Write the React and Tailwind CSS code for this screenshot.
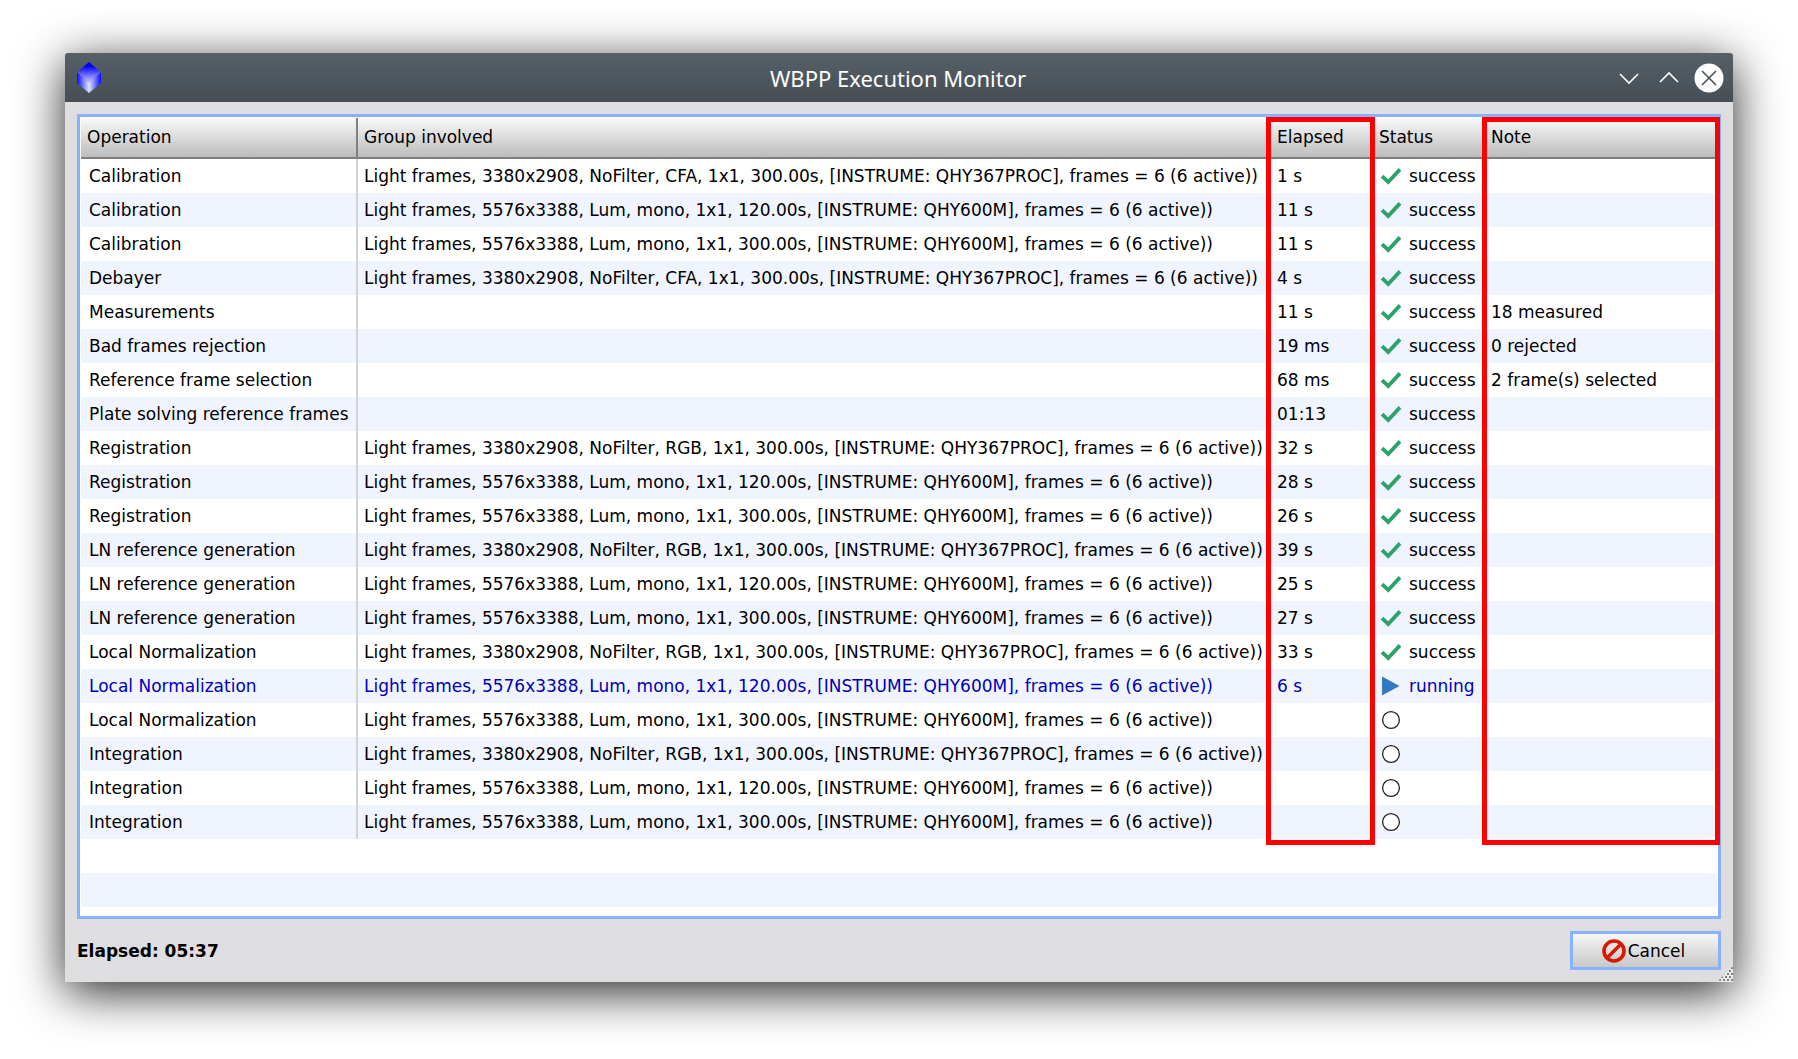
import React from 'react';

const light = (size, filter, exposure, instrument) =>
  `Light frames, ${size}, ${filter}, 1x1, ${exposure}s, [INSTRUME: ${instrument}], frames = 6 (6 active))`;

const CFA_300 = light('3380x2908', 'NoFilter, CFA', '300.00', 'QHY367PROC');
const RGB_300 = light('3380x2908', 'NoFilter, RGB', '300.00', 'QHY367PROC');
const LUM_120 = light('5576x3388', 'Lum, mono', '120.00', 'QHY600M');
const LUM_300 = light('5576x3388', 'Lum, mono', '300.00', 'QHY600M');

const operations = [
  { name: 'Calibration', group: CFA_300, elapsed: '1 s', status: 'success' },
  { name: 'Calibration', group: LUM_120, elapsed: '11 s', status: 'success' },
  { name: 'Calibration', group: LUM_300, elapsed: '11 s', status: 'success' },
  { name: 'Debayer', group: CFA_300, elapsed: '4 s', status: 'success' },
  { name: 'Measurements', elapsed: '11 s', status: 'success', note: '18 measured' },
  { name: 'Bad frames rejection', elapsed: '19 ms', status: 'success', note: '0 rejected' },
  { name: 'Reference frame selection', elapsed: '68 ms', status: 'success', note: '2 frame(s) selected' },
  { name: 'Plate solving reference frames', elapsed: '01:13', status: 'success' },
  { name: 'Registration', group: RGB_300, elapsed: '32 s', status: 'success' },
  { name: 'Registration', group: LUM_120, elapsed: '28 s', status: 'success' },
  { name: 'Registration', group: LUM_300, elapsed: '26 s', status: 'success' },
  { name: 'LN reference generation', group: RGB_300, elapsed: '39 s', status: 'success' },
  { name: 'LN reference generation', group: LUM_120, elapsed: '25 s', status: 'success' },
  { name: 'LN reference generation', group: LUM_300, elapsed: '27 s', status: 'success' },
  { name: 'Local Normalization', group: RGB_300, elapsed: '33 s', status: 'success' },
  { name: 'Local Normalization', group: LUM_120, elapsed: '6 s', status: 'running' },
  { name: 'Local Normalization', group: LUM_300, status: 'pending' },
  { name: 'Integration', group: RGB_300, status: 'pending' },
  { name: 'Integration', group: LUM_120, status: 'pending' },
  { name: 'Integration', group: LUM_300, status: 'pending' }
];

const StatusIcon = ({ status }) => (
  <svg viewBox="0 0 24 24" className="size-6 shrink-0" aria-hidden="true">
    {status === 'success' && (
      <path d="M3 12.2 L9.2 18 L21 5.4" fill="none" stroke="#2ba46b" strokeWidth="3.8" />
    )}
    {status === 'running' && <path d="M3 2.5 L20.5 12 L3 21.5 Z" fill="#3579c2" />}
    {status === 'pending' && (
      <circle cx="12" cy="12" r="8.4" fill="#fff" stroke="#222" strokeWidth="1.3" />
    )}
  </svg>
);

const AppLogo = () => (
  <svg viewBox="0 0 24 31" className="h-[31px] w-6" aria-hidden="true">
    <defs>
      <linearGradient id="logoTop" x1="0" y1="0" x2="0" y2="1">
        <stop offset="0.2" stopColor="#0000f5" />
        <stop offset="1" stopColor="#c8ccff" />
      </linearGradient>
      <linearGradient id="logoLeft" x1="0" y1="0" x2="1" y2="0">
        <stop offset="0" stopColor="#0a0aff" />
        <stop offset="1" stopColor="#dce4fa" />
      </linearGradient>
      <linearGradient id="logoRight" x1="1" y1="0" x2="0" y2="0">
        <stop offset="0" stopColor="#0a0aff" />
        <stop offset="1" stopColor="#dce4fa" />
      </linearGradient>
    </defs>
    <path d="M12 0 L24 10.5 L12 20.5 L0 10.5 Z" fill="url(#logoTop)" />
    <path d="M0 10.5 L12 20.5 V31 L0 21 Z" fill="url(#logoLeft)" />
    <path d="M24 10.5 L12 20.5 V31 L24 21 Z" fill="url(#logoRight)" />
  </svg>
);

const TitleBar = () => (
  <header className="flex h-[49px] items-center justify-between rounded-t-[3px] bg-linear-to-b from-[#566067] to-[#464e54] pr-[10px] pl-3">
    <div className="flex w-26">
      <AppLogo />
    </div>
    <h1 className="font-['Noto_Sans',sans-serif] text-[22px] leading-7 text-[#fcfcfc]">WBPP Execution Monitor</h1>
    <div className="flex gap-3">
      <button type="button" aria-label="Minimize" className="size-7">
        <svg viewBox="0 0 28 28" className="size-7" fill="none" stroke="#fcfcfc" strokeWidth="1.6">
          <path d="M5 10 L14 19 L23 10" />
        </svg>
      </button>
      <button type="button" aria-label="Maximize" className="size-7">
        <svg viewBox="0 0 28 28" className="size-7" fill="none" stroke="#fcfcfc" strokeWidth="1.6">
          <path d="M5 18 L14 9 L23 18" />
        </svg>
      </button>
      <button type="button" aria-label="Close" className="size-7">
        <svg viewBox="0 0 28 28" className="size-7 overflow-visible">
          <circle cx="14" cy="14" r="14.5" fill="#fcfcfc" />
          <path d="M7 7 L21 21 M21 7 L7 21" stroke="#4a5359" strokeWidth="1.6" />
        </svg>
      </button>
    </div>
  </header>
);

const OperationsTable = () => (
  <div className="border-3 border-[#88b2ff] bg-white p-px">
    <div className="relative">
      <table className="w-full table-fixed border-separate border-spacing-0 text-left whitespace-nowrap">
        <colgroup>
          <col className="w-[277px]" />
          <col className="w-[913px]" />
          <col className="w-[102px]" />
          <col className="w-[112px]" />
          <col />
        </colgroup>
        <thead>
          <tr className="h-[41px] bg-linear-to-b from-[#fafafa] to-[#b9b9b9]">
            <th className="border-r-2 border-b-2 border-[#808080] px-1.5 pb-0.5 font-normal">Operation</th>
            <th className="border-b-2 border-[#808080] px-1.5 pb-0.5 font-normal">Group involved</th>
            <th className="border-b-2 border-[#808080] px-1.5 pb-0.5 font-normal">Elapsed</th>
            <th className="border-b-2 border-[#808080] px-1.5 pb-0.5 font-normal">Status</th>
            <th className="border-b-2 border-[#808080] px-1.5 pb-0.5 font-normal">Note</th>
          </tr>
        </thead>
        <tbody>
          {operations.map((op, i) => (
            <tr
              key={i}
              className={`h-[34px] even:bg-[#f0f4ff] ${op.status === 'running' ? 'text-[#0000b4]' : 'text-black'}`}
            >
              <td className="border-r-2 border-[#d3d3d3] pl-2">{op.name}</td>
              <td className="px-1.5">{op.group}</td>
              <td className="px-1.5">{op.elapsed}</td>
              <td className="pl-1.5">
                <div className="flex items-center gap-1.5">
                  <StatusIcon status={op.status} />
                  {op.status !== 'pending' && op.status}
                </div>
              </td>
              <td className="px-1.5">{op.note}</td>
            </tr>
          ))}
        </tbody>
      </table>

      {/* column highlights */}
      <div className="pointer-events-none absolute inset-x-0 -top-px -bottom-1.5 grid grid-cols-[277px_913px_102px_112px_1fr]">
        <div className="col-start-3 -mr-0.5 -ml-[5px] border-5 border-[#ff0000]" />
        <div className="col-start-5 -mr-[3px] -ml-[3px] border-5 border-[#ff0000]" />
      </div>
    </div>
    <div className="mt-[34px] mb-2 h-[34px] bg-[#f0f4ff]" />
  </div>
);

const SizeGrip = () => (
  <svg viewBox="0 0 16 16" className="absolute right-0 bottom-0 size-4" aria-hidden="true">
    <defs>
      <pattern id="grip" width="4" height="6" patternUnits="userSpaceOnUse">
        <rect width="4" height="6" fill="#ececec" />
        <rect x="2" y="1" width="2" height="2" fill="#808080" />
        <rect y="4" width="2" height="2" fill="#808080" />
      </pattern>
    </defs>
    <path d="M16 0 V16 H0 Z" fill="url(#grip)" />
  </svg>
);

const App = () => {
  return (
    <div className="min-h-screen bg-white px-[65px] pt-[53px] pb-[77px] font-['DejaVu_Sans',sans-serif] text-[17px] leading-6 text-black">
      <main className="relative rounded-t-[3px] bg-[#dedee0] shadow-[0_10px_48px_rgba(0,0,0,0.86)]">
        <TitleBar />
        <div className="flex flex-col gap-3 p-3">
          <OperationsTable />
          <div className="flex items-center justify-between">
            <p className="font-bold">Elapsed: 05:37</p>
            <button
              type="button"
              className="flex h-[39px] w-[151px] items-center justify-center gap-0.5 border-3 border-[#88b2ff] bg-linear-to-b from-[#f6f6f6] to-[#c8c8c8] pr-1"
            >
              <svg viewBox="0 0 24 24" className="size-6" fill="none" stroke="#d81800" strokeWidth="3.6" aria-hidden="true">
                <circle cx="12" cy="12" r="10" />
                <path d="M19 5 L5 19" />
              </svg>
              Cancel
            </button>
          </div>
        </div>
        <SizeGrip />
      </main>
    </div>
  );
};

export default App;
